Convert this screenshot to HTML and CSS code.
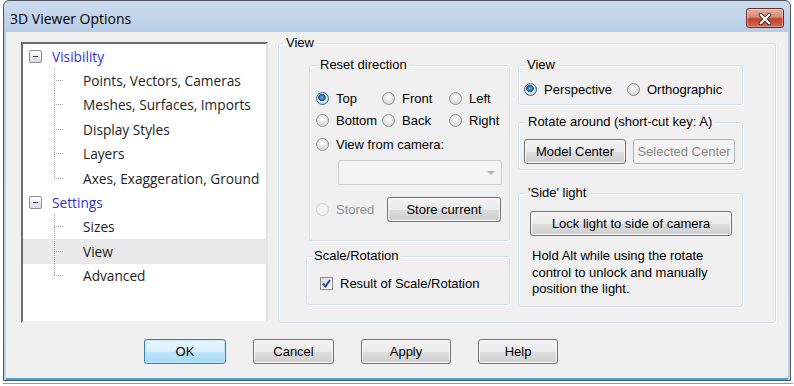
FILE: index.html
```html
<!DOCTYPE html>
<html lang="en">
<head>
<meta charset="UTF-8">
<meta name="viewport" content="width=device-width, initial-scale=1.0">
<title>3D Viewer Options</title>
<link rel="stylesheet" href="styles.css">
</head>
<body>
<div class="window">
  <div class="titlebar">
    <span class="title">3D Viewer Options</span>
    <button class="close" aria-label="Close">
      <svg width="38" height="20" viewBox="0 0 38 20">
        <path d="M14.5 5.5 L23.5 14.5 M23.5 5.5 L14.5 14.5" stroke="#4a2a26" stroke-width="4.2" stroke-linecap="round"/>
        <path d="M14.5 5.5 L23.5 14.5 M23.5 5.5 L14.5 14.5" stroke="#ffffff" stroke-width="2.4" stroke-linecap="round"/>
      </svg>
    </button>
  </div>
  <div class="client">
    <div class="main">
      <ul class="tree">
        <li class="node"><span class="expander"></span><span class="node-label">Visibility</span></li>
        <li class="leaf">Points, Vectors, Cameras</li>
        <li class="leaf">Meshes, Surfaces, Imports</li>
        <li class="leaf">Display Styles</li>
        <li class="leaf">Layers</li>
        <li class="leaf last">Axes, Exaggeration, Ground</li>
        <li class="node"><span class="expander"></span><span class="node-label">Settings</span></li>
        <li class="leaf">Sizes</li>
        <li class="leaf selected">View</li>
        <li class="leaf last">Advanced</li>
      </ul>

      <fieldset class="group view-group">
        <legend>View</legend>
        <div class="view-body">
          <div class="col-left">
            <fieldset class="group reset-group">
              <legend>Reset direction</legend>
              <div class="reset-body">
                <div class="radio-grid">
                  <label class="opt"><span class="radio checked"></span>Top</label>
                  <label class="opt"><span class="radio"></span>Front</label>
                  <label class="opt"><span class="radio"></span>Left</label>
                </div>
                <div class="radio-grid second">
                  <label class="opt"><span class="radio"></span>Bottom</label>
                  <label class="opt"><span class="radio"></span>Back</label>
                  <label class="opt"><span class="radio"></span>Right</label>
                </div>
                <label class="opt camera-row"><span class="radio"></span>View from camera:</label>
                <div class="combo"><span class="combo-arrow"></span></div>
                <div class="stored-row">
                  <label class="opt disabled"><span class="radio"></span>Stored</label>
                  <button class="btn store-btn">Store current</button>
                </div>
              </div>
            </fieldset>

            <fieldset class="group scale-group">
              <legend>Scale/Rotation</legend>
              <div class="scale-body">
                <label class="opt">
                  <span class="check">
                    <svg width="11" height="11" viewBox="0 0 11 11"><path d="M2 5.5 L4.5 8.5 L9 2" fill="none" stroke="#2b4f93" stroke-width="2"/></svg>
                  </span>Result of Scale/Rotation
                </label>
              </div>
            </fieldset>
          </div>

          <div class="col-right">
            <fieldset class="group mode-group">
              <legend>View</legend>
              <div class="mode-body">
                <label class="opt"><span class="radio checked"></span>Perspective</label>
                <label class="opt"><span class="radio"></span>Orthographic</label>
              </div>
            </fieldset>

            <fieldset class="group rotate-group">
              <legend>Rotate around (short-cut key: A)</legend>
              <div class="rotate-body">
                <button class="btn center-btn">Model Center</button>
                <button class="btn center-btn" disabled>Selected Center</button>
              </div>
            </fieldset>

            <fieldset class="group light-group">
              <legend>'Side' light</legend>
              <div class="light-body">
                <button class="btn lock-btn">Lock light to side of camera</button>
                <p class="hint">Hold Alt while using the rotate<br>control to unlock and manually<br>position the light.</p>
              </div>
            </fieldset>
          </div>
        </div>
      </fieldset>
    </div>

    <div class="footer">
      <button class="btn default w-ok">OK</button>
      <button class="btn w-cancel">Cancel</button>
      <button class="btn w-apply">Apply</button>
      <button class="btn w-help">Help</button>
    </div>
  </div>
</div>
<div class="under-line"></div>
</body>
</html>
```

FILE: styles.css
```css
* { box-sizing: border-box; }
body { margin: 0; background: #fff; font-family: "Liberation Sans", Arial, sans-serif; font-size: 13px; color: #000; }

/* window frame */
.window { margin-left: 3px; width: 788px; border: 1px solid #4c5560; border-radius: 6px 6px 0 0; background: linear-gradient(#cddcee, #b7cce5 32px, #bfd3ea); }
.titlebar { height: 31px; display: flex; justify-content: space-between; align-items: flex-start; padding-left: 6px; padding-right: 6px; }
.title { font-family: "Open Sans", "Noto Sans", sans-serif; font-size: 14px; line-height: 16px; margin-top: 10px; color: #000; }
.close { margin-top: 7px; width: 38px; height: 20px; padding: 0; border: 1px solid #6b2f29; border-radius: 3px; background: linear-gradient(#eab3a5, #d98771 45%, #c2402f 55%, #d06a4f); box-shadow: inset 0 0 0 1px rgba(255,255,255,0.35); display: flex; }
.client { margin: 0 2px; background: #f0f0f0; border-bottom: 2px solid #4ba2dc; }
.under-line { margin: 2px 0 0 3px; width: 790px; height: 1px; background: #9a9a9a; }

/* tree */
.main { display: flex; align-items: flex-start; padding: 3px 0 0 15px; }
.tree { list-style: none; margin: 7px 0 0; padding: 0; width: 247px; height: 281px; background: #fff; border: 2px solid; border-color: #6d6d6d #e4e4e4 #f4f4f4 #6d6d6d; font-family: "Open Sans", "Noto Sans", sans-serif; font-size: 13.7px; }
.tree li { height: 24.4px; display: flex; align-items: center; white-space: nowrap; }
.node { padding-left: 6px; }
.expander { width: 13px; height: 13px; border: 1px solid #8b8f94; border-radius: 2px; background: linear-gradient(#ffffff, #d9dde2); display: flex; align-items: center; justify-content: center; margin-right: 10px; }
.expander::before { content: ""; width: 5px; height: 1px; background: #2b3a4d; }
.node-label { color: #3434d0; }
.leaf {
  padding-left: 60px;
  color: #1e1e1e;
  background-image: repeating-linear-gradient(to bottom, #a8a8a8 0 1px, transparent 1px 2px), repeating-linear-gradient(to right, #a8a8a8 0 1px, transparent 1px 2px);
  background-size: 1px 100%, 9px 1px;
  background-position: 31px 0, 31px 50%;
  background-repeat: no-repeat;
}
.leaf.last { background-size: 1px 50%, 9px 1px; }
.leaf.selected { background-color: #e9e9e9; }

/* group boxes */
.group { margin: 0; padding: 0; min-width: 0; border: 1px solid #d5dfe5; border-radius: 3px; box-shadow: inset 1px 1px 0 #fff, 1px 1px 0 #fff; }
.group legend { padding: 0 2px; line-height: 16px; color: #000; }
.view-group { width: 498px; margin-left: 10px; }
.view-group > legend { margin-left: 5px; }
.view-body { display: flex; gap: 8px; padding: 6px 0 15px 27px; }
.col-left { width: 204px; }
.col-right { width: 225px; }

.reset-group { margin-left: 3px; }
.reset-group > legend { margin-left: 8px; }
.reset-body { padding: 15px 8px 19px 6px; }
.radio-grid { display: grid; grid-template-columns: 66px 67px auto; height: 20px; }
.radio-grid.second { margin-top: 2px; }
.camera-row { margin-top: 4px; height: 20px; }
.combo { margin: 6px 0 0 22px; width: 164px; height: 25px; border: 1px solid #cdcdcd; border-radius: 2px; background: #f4f4f4; display: flex; align-items: center; justify-content: flex-end; padding-right: 6px; }
.combo-arrow { width: 0; height: 0; border-left: 4px solid transparent; border-right: 4px solid transparent; border-top: 4px solid #b4b4b4; }
.stored-row { display: flex; align-items: center; justify-content: space-between; margin-top: 12px; height: 24px; }
.store-btn { width: 114px; height: 24px; }

.scale-group { margin-top: 7px; }
.scale-group > legend { margin-left: 5px; }
.scale-body { padding: 9px 0 11px 13px; }

.mode-group > legend { margin-left: 6px; }
.mode-body { display: grid; grid-template-columns: 103px auto; height: 20px; margin: 6px 0 5px 5px; }
.rotate-group { margin-top: 9px; }
.rotate-group > legend { margin-left: 7px; }
.rotate-body { display: flex; gap: 7px; padding: 9px 0 5px 5px; }
.center-btn { width: 102px; }
.light-group { margin-top: 15px; }
.light-group > legend { margin-left: 7px; }
.light-body { padding: 10px 0 8px 11px; }
.lock-btn { width: 202px; }
.hint { margin: 12px 0 0 2px; line-height: 16.5px; }

/* controls */
.opt { display: flex; align-items: center; gap: 7px; height: 20px; white-space: nowrap; }
.opt.disabled { color: #8d8d8d; }
.radio { flex: none; width: 13px; height: 13px; border-radius: 50%; border: 1px solid #8e8f8f; background: radial-gradient(circle at 50% 40%, #ffffff, #e2e2e2 55%, #c9c9c9); }
.radio.checked { border-color: #2c628b; background: radial-gradient(circle at 45% 40%, #7dc4ee 0, #2f7fbf 2px, #174f85 3.5px, #f0f0f0 4px, #dadada 6px); }
.opt.disabled .radio { border-color: #cfcfcf; background: #f4f4f4; }
.check { flex: none; width: 13px; height: 13px; border: 1px solid #8e8f8f; background: linear-gradient(135deg, #dcdcdc, #fbfbfb); display: flex; align-items: center; justify-content: center; }

.btn { height: 25px; padding: 0; font-family: "Liberation Sans", Arial, sans-serif; font-size: 13px; color: #000; border: 1px solid #707070; border-radius: 3px; background: linear-gradient(#f2f2f2, #ebebeb 50%, #dddddd 51%, #cfcfcf); box-shadow: inset 0 0 0 1px #fafafa; }
.btn:disabled { color: #8a8a8a; border-color: #adb2b5; background: #f4f4f4; box-shadow: none; }
.btn.default { border-color: #3c7fb1; background: linear-gradient(#eaf6fd, #d9f0fc 50%, #bee6fd 51%, #a7d9f5); box-shadow: inset 0 0 0 1px #bfe6fb; }

.footer { display: flex; gap: 27px; padding: 16px 0 14px 138px; }
.w-ok { width: 82px; }
.w-cancel { width: 81px; }
.w-apply { width: 90px; }
.w-help { width: 80px; }
```
